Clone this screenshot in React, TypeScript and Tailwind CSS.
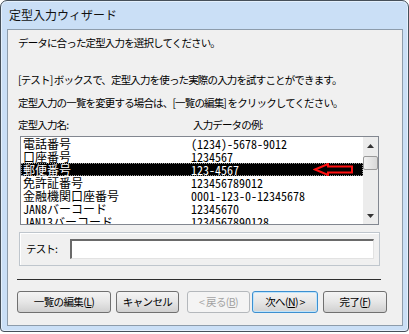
import React from "react";

const UI = { fontFamily: '"Noto Sans CJK JP", "Noto Sans", sans-serif' };
const MONO = { fontFamily: '"Noto Sans Mono CJK JP", "Noto Sans CJK JP", monospace' };

const rows: [string, string][] = [
  ["電話番号", "(1234)-5678-9012"],
  ["口座番号", "1234567"],
  ["郵便番号", "123-4567"],
  ["免許証番号", "123456789012"],
  ["金融機関口座番号", "0001-123-0-12345678"],
  ["JAN8バーコード", "12345670"],
  ["JAN13バーコード", "1234567890128"],
];

function Btn({
  children,
  w,
  className = "",
  variant = "normal",
}: {
  children: React.ReactNode;
  w: string;
  className?: string;
  variant?: "normal" | "disabled" | "focus";
}) {
  const base =
    "h-[22px] flex items-center justify-center rounded-[3px] border text-[10.5px] tracking-[-0.6px] leading-none";
  const v =
    variant === "disabled"
      ? "border-[#b4b8bc] bg-[#f4f4f4] text-[#a3a3a3]"
      : variant === "focus"
      ? "border-[#3c8fd0] bg-gradient-to-b from-[#f4f4f4] via-[#e6e6e6] to-[#d2d2d2] text-black shadow-[inset_0_0_0_1px_#bfe4fb]"
      : "border-[#707070] bg-gradient-to-b from-[#f4f4f4] via-[#e6e6e6] to-[#d0d0d0] text-black";
  return <div className={`${base} ${v} ${w} ${className}`}>{children}</div>;
}

export default function App() {
  return (
    <div className="w-[409px] h-[334px] bg-white" style={UI}>
      <div className="w-[409px] h-[332px] border border-[#46505a] rounded-t-[7px] rounded-b-[4px] bg-[#cadff6] flex flex-col pl-[6px] pr-[5px] pb-[5px] shadow-[inset_0_0_0_1px_#e4f0fc]">
        <div className="h-[28px] flex items-center pl-[2px] text-[12px] text-[#111]">
          定型入力ウィザード
        </div>
        <div className="flex-1 border border-[#8d9cab] bg-[#f0f0f0] flex flex-col pl-[10px] text-black">
          <div className="mt-[6px] h-[14px] leading-[14px] text-[10.5px] tracking-[-0.85px]">
            データに合った定型入力を選択してください。
          </div>
          <div className="mt-[23px] h-[14px] leading-[14px] text-[10.5px] tracking-[-0.85px]">
            [テスト] ボックスで、定型入力を使った実際の入力を試すことができます。
          </div>
          <div className="mt-[9px] h-[14px] leading-[14px] text-[10.5px] tracking-[-0.85px]">
            定型入力の一覧を変更する場合は、[一覧の編集] をクリックしてください。
          </div>
          <div className="mt-[8px] h-[14px] leading-[14px] text-[10.5px] tracking-[-0.85px] flex">
            <div className="w-[175px]">定型入力名:</div>
            <div>入力データの例:</div>
          </div>
          {/* list box */}
          <div className="mt-[4px] ml-[2px] w-[359px] h-[89px] border border-[#828790] bg-white flex overflow-hidden">
            <div className="flex-1 flex flex-col overflow-hidden" style={MONO}>
              {rows.map(([a, b], i) => {
                const sel = i === 2;
                return (
                  <div
                    key={i}
                    className={`relative h-[13px] shrink-0 flex items-center text-[12px] leading-[13px] ${
                      sel ? "bg-black text-white outline outline-1 outline-dotted outline-[#9a9a9a] -outline-offset-1" : "text-black"
                    }`}
                  >
                    <div className="w-[170px] pl-[2px] whitespace-nowrap">{a}</div>
                    <div className="whitespace-nowrap">{b}</div>
                    {sel && (
                      <svg
                        className="absolute left-[292px] top-0"
                        width="42"
                        height="13"
                        viewBox="0 0 42 13"
                      >
                        <path
                          d="M2 6.5 L15 1 L15 3.5 L39 3.5 L39 9.5 L15 9.5 L15 12 Z"
                          fill="#000"
                          stroke="#ff1010"
                          strokeWidth="2"
                          strokeLinejoin="miter"
                        />
                      </svg>
                    )}
                  </div>
                );
              })}
            </div>
            {/* scrollbar */}
            <div className="w-[15px] bg-[#ececec] flex flex-col items-center">
              <div className="h-[17px] w-full flex items-center justify-center">
                <svg width="7" height="4" viewBox="0 0 7 4">
                  <path d="M0 4 L3.5 0 L7 4 Z" fill="#333" />
                </svg>
              </div>
              <div className="mt-[2px] h-[14px] w-[15px] rounded-[2px] border border-[#9a9a9a] bg-gradient-to-r from-[#f2f2f2] to-[#d8d8d8]" />
              <div className="flex-1" />
              <div className="h-[17px] w-full flex items-center justify-center">
                <svg width="7" height="4" viewBox="0 0 7 4">
                  <path d="M0 0 L7 0 L3.5 4 Z" fill="#333" />
                </svg>
              </div>
            </div>
          </div>
          {/* test group */}
          <div className="mt-[7px] ml-[1px] w-[361px] h-[34px] border border-[#bfc6cd] shadow-[inset_1px_1px_0_#ffffff] flex items-center pl-[6px] pr-[5px]">
            <div className="w-[44px] text-[10.5px] tracking-[-0.85px] leading-none">テスト:</div>
            <div className="flex-1 h-[20px] bg-white border-t-2 border-l-2 border-t-[#6a6a6a] border-l-[#6a6a6a] border-r border-b border-r-[#e2e2e2] border-b-[#e2e2e2]" />
          </div>
          {/* separator */}
          <div className="mt-[13px] -ml-[1px] w-[364px] h-px bg-[#2e2e2e]" />
          {/* buttons */}
          <div className="mt-[11px] -ml-[1px] flex">
            <Btn w="w-[94px]">
              一覧の編集(<span className="underline">L</span>)
            </Btn>
            <Btn w="w-[63px]" className="ml-[5px]">
              キャンセル
            </Btn>
            <Btn w="w-[63px]" className="ml-[8px]" variant="disabled">
              &lt; 戻る(<span className="underline">B</span>)
            </Btn>
            <Btn w="w-[66px]" className="ml-[2px]" variant="focus">
              次へ(<span className="underline">N</span>) &gt;
            </Btn>
            <Btn w="w-[64px]" className="ml-[5px]">
              完了(<span className="underline">F</span>)
            </Btn>
          </div>
        </div>
      </div>
    </div>
  );
}
